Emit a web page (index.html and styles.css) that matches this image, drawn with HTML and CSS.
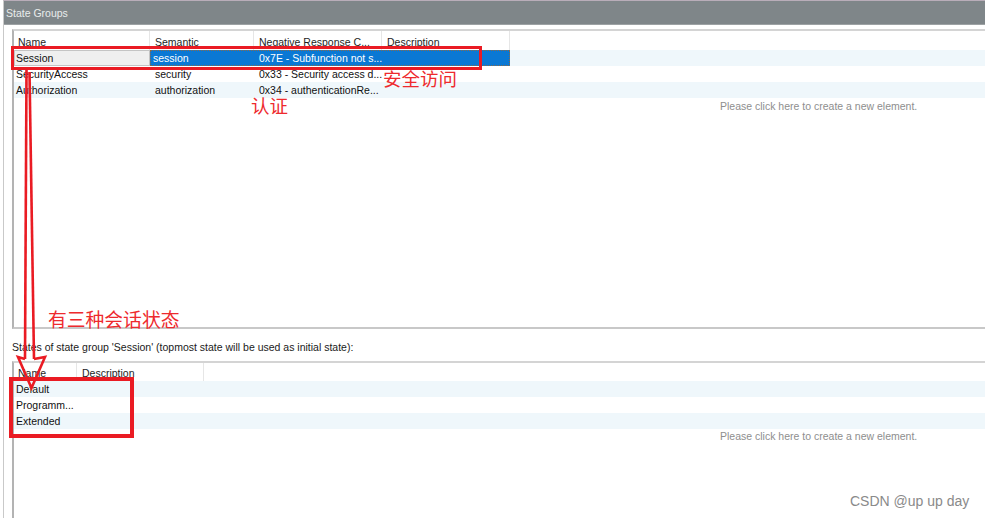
FILE: index.html
```html
<!DOCTYPE html>
<html>
<head>
<meta charset="utf-8">
<link rel="stylesheet" href="styles.css">
</head>
<body>
<div class="panel">
  <div class="titlebar">State Groups</div>
  <div class="content">
    <div class="grid grid-top">
      <div class="row head">
        <div class="cell c1">Name</div>
        <div class="cell c2">Semantic</div>
        <div class="cell c3">Negative Response C...</div>
        <div class="cell c4">Description</div>
      </div>
      <div class="row band selected">
        <div class="cell c1 namesel">Session</div>
        <div class="bluesel">
          <div class="cell c2">session</div>
          <div class="cell c3">0x7E - Subfunction not s...</div>
          <div class="cell c4"></div>
        </div>
      </div>
      <div class="row">
        <div class="cell c1">SecurityAccess</div>
        <div class="cell c2">security</div>
        <div class="cell c3">0x33 - Security access d...</div>
        <div class="cell c4"></div>
      </div>
      <div class="row band">
        <div class="cell c1">Authorization</div>
        <div class="cell c2">authorization</div>
        <div class="cell c3">0x34 - authenticationRe...</div>
        <div class="cell c4"></div>
      </div>
      <div class="placeholder">Please click here to create a new element.</div>
    </div>
    <div class="label">States of state group 'Session' (topmost state will be used as initial state):</div>
    <div class="grid grid-bottom">
      <div class="row head">
        <div class="cell d1">Name</div>
        <div class="cell d2">Description</div>
      </div>
      <div class="row band">
        <div class="cell d1">Default</div>
        <div class="cell d2"></div>
      </div>
      <div class="row">
        <div class="cell d1">Programm...</div>
        <div class="cell d2"></div>
      </div>
      <div class="row band">
        <div class="cell d1">Extended</div>
        <div class="cell d2"></div>
      </div>
      <div class="placeholder">Please click here to create a new element.</div>
    </div>
  </div>
</div>

<div class="redbox box-session"></div>
<div class="redbox box-states"></div>
<div class="note note-security">安全访问</div>
<div class="note note-auth">认证</div>
<div class="note note-states">有三种会话状态</div>
<svg class="arrow" width="985" height="518" viewBox="0 0 985 518">
  <path d="M26.5 70 L25 359" />
  <path d="M29.5 72 L34 359" />
  <path d="M25 359 L18 357 L31.5 388 L45 357 L34 359" />
</svg>
<div class="watermark">CSDN @up up day</div>
</body>
</html>
```

FILE: styles.css
```css
* { box-sizing: border-box; }
html, body {
  margin: 0;
  padding: 0;
  background: #ffffff;
  width: 985px;
  height: 518px;
  overflow: hidden;
  font-family: "Liberation Sans", Arial, sans-serif;
  font-size: 10.5px;
  color: #111;
}
.panel {
  margin-left: 3px;
  height: 518px;
  border-left: 1px solid #c9c9c9;
  border-top: 1px solid #b9adb9;
  display: flex;
  flex-direction: column;
}
.titlebar {
  height: 24px;
  line-height: 24px;
  background: #7f8689;
  color: #e9ecec;
  padding-left: 2px;
  font-size: 10.5px;
  border-bottom: 1px solid #9da2a4;
}
.content {
  flex: 1;
  display: flex;
  flex-direction: column;
  padding: 4px 0 0 8px;
}
.grid {
  border-top: 2px solid #d4d4d4;
  border-left: 2px solid #b3b3b3;
  display: flex;
  flex-direction: column;
}
.grid-top {
  height: 300px;
  border-bottom: 2px solid #c8c8c8;
}
.grid-bottom {
  flex: 1;
}
.row {
  display: flex;
  height: 16px;
  align-items: stretch;
}
.row.head {
  height: 19px;
  background: #fff;
}
.grid-bottom .row.head { height: 18px; }
.band { background: #eff7fb; }
.cell {
  display: flex;
  align-items: center;
  white-space: nowrap;
  overflow: hidden;
  padding-left: 5px;
}
.head .cell {
  border-right: 1px solid #e6e6e6;
  color: #1e1e1e;
  padding-top: 2px;
}
.c1 { width: 136px; padding-left: 2px; }
.head .c1 { padding-left: 4px; }
.c2 { width: 104px; }
.c3 { width: 128px; }
.c4 { width: 128px; }
.d1 { width: 63px; padding-left: 2px; }
.head .d1 { padding-left: 4px; }
.d2 { width: 127px; }
.namesel {
  background: #efefef;
  border: 1px solid #c4c4c4;
  padding-left: 1px;
}
.bluesel {
  display: flex;
  background: #0a78d4;
  color: #fff;
  outline: 1px dotted #8a6a4a;
  outline-offset: -1px;
}
.bluesel .cell { padding-left: 3px; }
.bluesel .c3 { padding-left: 5px; }
.placeholder {
  padding-left: 706px;
  height: 14px;
  line-height: 14px;
  color: #8e8e8e;
  margin-top: 1px;
}
.grid-bottom .placeholder { margin-top: 0px; }
.label {
  height: 32px;
  padding-top: 4px;
  display: flex;
  align-items: center;
  color: #1a1a1a;
}
.redbox {
  position: absolute;
  border: 3px solid #ea1b23;
}
.box-session { left: 11px; top: 46px; width: 471px; height: 24px; }
.box-states { left: 9px; top: 377px; width: 125px; height: 61px; border-width: 4px; }
.note {
  position: absolute;
  color: #ee2a2e;
  font-family: "Noto Sans CJK SC", sans-serif;
  font-size: 18.5px;
  line-height: 17px;
  white-space: nowrap;
}
.note-security { left: 383px; top: 70px; }
.note-auth { left: 251px; top: 97px; }
.note-states { left: 48px; top: 310px; font-size: 18.8px; }
.arrow {
  position: absolute;
  left: 0;
  top: 0;
  pointer-events: none;
}
.arrow path {
  fill: none;
  stroke: #ea1b23;
  stroke-width: 2.6;
  stroke-linejoin: miter;
}
.watermark {
  position: absolute;
  left: 850px;
  top: 493px;
  font-size: 14px;
  color: #8a8a8a;
  font-family: "Liberation Sans", Arial, sans-serif;
}
```
